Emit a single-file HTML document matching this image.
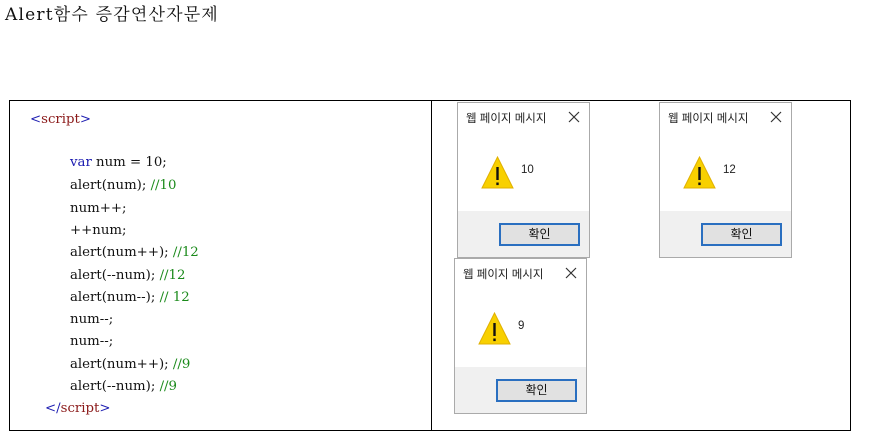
<!DOCTYPE html>
<html><head><meta charset="utf-8"><style>
body{margin:0;width:880px;height:438px;background:#fff;position:relative;overflow:hidden;font-family:"Liberation Serif","Noto Serif CJK KR",serif}
.t{position:absolute;left:5px;top:0px;color:#111;letter-spacing:1.2px;font-family:"DejaVu Serif","Noto Serif CJK KR",serif;font-size:17px}
.box{position:absolute;left:9px;top:100px;width:840px;height:329px;border:1px solid #000}
.div{position:absolute;left:431px;top:100px;width:1px;height:330px;background:#000}
.l{position:absolute;font-size:13.3px;color:#111;white-space:pre;line-height:16px;font-family:"DejaVu Serif",serif}
.b{color:#1a1ab0}.g{color:#1a8a1a}.r{color:#8b1a1a}
.d{position:absolute;width:131px;height:154px;border:1px solid #aaa;background:#fff;font-family:"Liberation Sans","Noto Sans CJK KR",sans-serif}
.d .h{position:absolute;left:8px;top:7px;font-size:11.5px;color:#222}
.d .x{position:absolute;left:110px;top:8px}
.d .f{position:absolute;left:0;top:108px;width:131px;height:46px;background:#f0f0f0}
.d .btn{position:absolute;left:41px;top:12px;width:77px;height:19px;border:2px solid #2a6fc0;background:#e1e1e1;font-size:12px;text-align:center;line-height:19px;color:#111;box-sizing:content-box}
.d .n{position:absolute;left:63px;top:61px;font-size:11.5px;color:#222}
.d svg.w{position:absolute;left:23px;top:53px}
</style></head><body>
<div class="t">Alert함수 증감연산자문제</div>
<div class="box"></div><div class="div"></div>
<div class="l" style="left:30px;top:112px"><span class="b">&lt;</span><span class="r">script</span><span class="b">&gt;</span></div>
<div class="l" style="left:70px;top:155px"><span class="b">var</span> num = 10;</div>
<div class="l" style="left:70px;top:178px">alert(num); <span class="g">//10</span></div>
<div class="l" style="left:70px;top:201px">num++;</div>
<div class="l" style="left:70px;top:223px">++num;</div>
<div class="l" style="left:70px;top:245px">alert(num++); <span class="g">//12</span></div>
<div class="l" style="left:70px;top:268px">alert(--num); <span class="g">//12</span></div>
<div class="l" style="left:70px;top:290px">alert(num--); <span class="g">// 12</span></div>
<div class="l" style="left:70px;top:312px">num--;</div>
<div class="l" style="left:70px;top:334px">num--;</div>
<div class="l" style="left:70px;top:357px">alert(num++); <span class="g">//9</span></div>
<div class="l" style="left:70px;top:379px">alert(--num); <span class="g">//9</span></div>
<div class="l" style="left:45px;top:401px"><span class="b">&lt;/</span><span class="r">script</span><span class="b">&gt;</span></div>

<div class="d" style="left:457px;top:102px"><div class="h">웹 페이지 메시지</div><svg class="x" width="12" height="12"><path d="M1 1L11 11M11 1L1 11" stroke="#333" stroke-width="1.2"/></svg>
<svg class="w" width="33" height="33"><polygon points="16.5,1 32,32 1,32" fill="#f8d000" stroke="#e0b000"/><rect x="15.3" y="11" width="2.4" height="13" fill="#111"/><rect x="15.3" y="26.5" width="2.4" height="2.6" fill="#111"/></svg>
<div class="n">10</div><div class="f"><div class="btn">확인</div></div></div>

<div class="d" style="left:659px;top:102px"><div class="h">웹 페이지 메시지</div><svg class="x" width="12" height="12"><path d="M1 1L11 11M11 1L1 11" stroke="#333" stroke-width="1.2"/></svg>
<svg class="w" width="33" height="33"><polygon points="16.5,1 32,32 1,32" fill="#f8d000" stroke="#e0b000"/><rect x="15.3" y="11" width="2.4" height="13" fill="#111"/><rect x="15.3" y="26.5" width="2.4" height="2.6" fill="#111"/></svg>
<div class="n">12</div><div class="f"><div class="btn">확인</div></div></div>

<div class="d" style="left:454px;top:258px"><div class="h">웹 페이지 메시지</div><svg class="x" width="12" height="12"><path d="M1 1L11 11M11 1L1 11" stroke="#333" stroke-width="1.2"/></svg>
<svg class="w" width="33" height="33"><polygon points="16.5,1 32,32 1,32" fill="#f8d000" stroke="#e0b000"/><rect x="15.3" y="11" width="2.4" height="13" fill="#111"/><rect x="15.3" y="26.5" width="2.4" height="2.6" fill="#111"/></svg>
<div class="n">9</div><div class="f"><div class="btn">확인</div></div></div>
</body></html>
